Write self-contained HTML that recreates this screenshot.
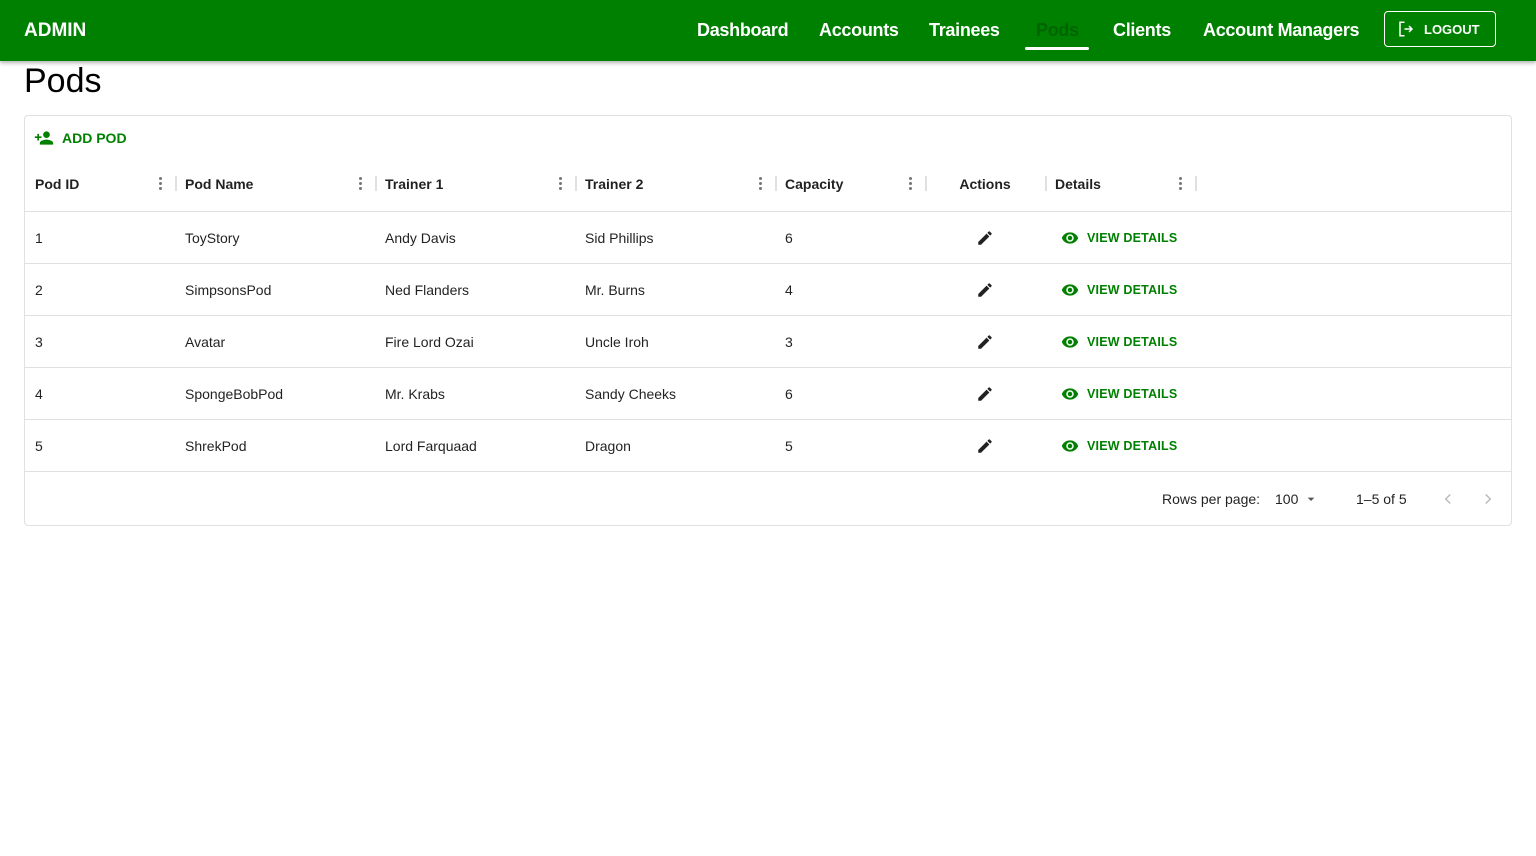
<!DOCTYPE html>
<html><head><meta charset="utf-8"><style>
*{box-sizing:border-box;margin:0;padding:0}
body{width:1536px;height:856px;background:#fff;font-family:"Liberation Sans",Arial,sans-serif;color:rgba(0,0,0,.87);position:relative;overflow:hidden}
.nav{position:absolute;left:0;top:0;width:1536px;height:61px;background:#008000;box-shadow:0 2px 4px rgba(0,0,0,.3)}
.nav .brand{position:absolute;left:24px;top:20px;color:#fff;font-size:19px;font-weight:bold}
.nav a{position:absolute;top:20px;color:#fff;font-size:18px;font-weight:bold;letter-spacing:-.3px}
.ul{position:absolute;left:1025px;top:47px;width:64px;height:3px;background:#fff;border-radius:2px}
.logout{position:absolute;left:1384px;top:11px;width:112px;height:36px;border:1px solid #fff;border-radius:4px;color:#fff;font-size:13px;font-weight:bold}
h1{position:absolute;left:24px;top:62px;font-size:34px;font-weight:normal;color:#000}
.card{position:absolute;left:24px;top:115px;width:1488px;height:411px;border:1px solid #e0e0e0;border-radius:4px}
.add{position:absolute;left:9px;top:12px;color:#008000;font-size:14px;font-weight:bold;display:flex;align-items:center;gap:8px}
.hdr{position:absolute;left:0;top:43px;width:1486px;height:53px;border-bottom:1px solid #e0e0e0;font-size:14px;font-weight:bold}
.hdr .c{height:50px}
.row{position:absolute;left:0;width:1486px;height:52px;border-bottom:1px solid #e0e0e0;font-size:14px}
.c{position:absolute;top:0;height:100%;display:flex;align-items:center}
.sep{position:absolute;top:17px;width:2px;height:15px;background:#e0e0e0}
.dots{position:absolute;top:17px;width:4px;height:16px}
.dots i{display:block;width:3px;height:3px;border-radius:50%;background:#757575;margin:1px 0 2px}
.vd{color:#008000;font-weight:bold;font-size:12.5px;display:flex;align-items:center;gap:8px;letter-spacing:.2px}
.foot{position:absolute;top:364px;left:0;width:1486px;height:38px;font-size:14px}
</style></head><body>
<div class="nav">
<div class="brand">ADMIN</div>
<a style="left:697px">Dashboard</a>
<a style="left:819px">Accounts</a>
<a style="left:929px">Trainees</a>
<a style="left:1036px;color:#006400">Pods</a>
<a style="left:1113px">Clients</a>
<a style="left:1203px">Account Managers</a>
<div class="ul"></div>
<div class="logout"><svg style="position:absolute;left:12px;top:8px" width="18" height="18" viewBox="0 0 24 24" fill="none" stroke="#fff" stroke-width="2"><path d="M10 3H4v18h6M10 12h10M16 8l4 4-4 4"/></svg><span style="position:absolute;left:39px;top:10px">LOGOUT</span></div>
</div>
<h1>Pods</h1>
<div class="card">
<div class="add"><svg width="20" height="20" viewBox="0 0 24 24" fill="#008000"><path d="M15 12c2.21 0 4-1.79 4-4s-1.79-4-4-4-4 1.79-4 4 1.79 4 4 4zm-9-2V7H4v3H1v2h3v3h2v-3h3v-2H6zm9 4c-2.67 0-8 1.34-8 4v2h16v-2c0-2.66-5.330-4-8-4z"/></svg>ADD POD</div>
<div class="hdr">
<div class="c" style="left:10px">Pod ID</div>
<div class="c" style="left:160px">Pod Name</div>
<div class="c" style="left:360px">Trainer 1</div>
<div class="c" style="left:560px">Trainer 2</div>
<div class="c" style="left:760px">Capacity</div>
<div class="c" style="left:900px;width:120px;justify-content:center">Actions</div>
<div class="c" style="left:1030px">Details</div>
<div class="dots" style="left:134px"><i></i><i></i><i></i></div><div class="sep" style="left:150px"></div>
<div class="dots" style="left:334px"><i></i><i></i><i></i></div><div class="sep" style="left:350px"></div>
<div class="dots" style="left:534px"><i></i><i></i><i></i></div><div class="sep" style="left:550px"></div>
<div class="dots" style="left:734px"><i></i><i></i><i></i></div><div class="sep" style="left:750px"></div>
<div class="dots" style="left:884px"><i></i><i></i><i></i></div><div class="sep" style="left:900px"></div>
<div class="sep" style="left:1020px"></div>
<div class="dots" style="left:1154px"><i></i><i></i><i></i></div><div class="sep" style="left:1170px"></div>
</div>
<div class="row" style="top:96px"><div class="c" style="left:10px">1</div><div class="c" style="left:160px">ToyStory</div><div class="c" style="left:360px">Andy Davis</div><div class="c" style="left:560px">Sid Phillips</div><div class="c" style="left:760px">6</div><div class="c" style="left:951px"><svg width="18" height="18" viewBox="0 0 24 24" fill="#222"><path d="M3 17.25V21h3.75L17.81 9.94l-3.75-3.75L3 17.25zM20.71 7.04a1 1 0 000-1.41l-2.34-2.34a1 1 0 00-1.41 0l-1.83 1.83 3.75 3.75 1.83-1.83z"/></svg></div><div class="c vd" style="left:1036px"><svg width="18" height="18" viewBox="0 0 24 24" fill="#008000"><path d="M12 4.5C7 4.5 2.73 7.61 1 12c1.73 4.39 6 7.5 11 7.5s9.27-3.11 11-7.5c-1.73-4.39-6-7.5-11-7.5zM12 17a5 5 0 110-10 5 5 0 010 10zm0-8a3 3 0 100 6 3 3 0 000-6z"/></svg>VIEW DETAILS</div></div>
<div class="row" style="top:148px"><div class="c" style="left:10px">2</div><div class="c" style="left:160px">SimpsonsPod</div><div class="c" style="left:360px">Ned Flanders</div><div class="c" style="left:560px">Mr. Burns</div><div class="c" style="left:760px">4</div><div class="c" style="left:951px"><svg width="18" height="18" viewBox="0 0 24 24" fill="#222"><path d="M3 17.25V21h3.75L17.81 9.94l-3.75-3.75L3 17.25zM20.71 7.04a1 1 0 000-1.41l-2.34-2.34a1 1 0 00-1.41 0l-1.83 1.83 3.75 3.75 1.83-1.83z"/></svg></div><div class="c vd" style="left:1036px"><svg width="18" height="18" viewBox="0 0 24 24" fill="#008000"><path d="M12 4.5C7 4.5 2.73 7.61 1 12c1.73 4.39 6 7.5 11 7.5s9.27-3.11 11-7.5c-1.73-4.39-6-7.5-11-7.5zM12 17a5 5 0 110-10 5 5 0 010 10zm0-8a3 3 0 100 6 3 3 0 000-6z"/></svg>VIEW DETAILS</div></div>
<div class="row" style="top:200px"><div class="c" style="left:10px">3</div><div class="c" style="left:160px">Avatar</div><div class="c" style="left:360px">Fire Lord Ozai</div><div class="c" style="left:560px">Uncle Iroh</div><div class="c" style="left:760px">3</div><div class="c" style="left:951px"><svg width="18" height="18" viewBox="0 0 24 24" fill="#222"><path d="M3 17.25V21h3.75L17.81 9.94l-3.75-3.75L3 17.25zM20.71 7.04a1 1 0 000-1.41l-2.34-2.34a1 1 0 00-1.41 0l-1.83 1.83 3.75 3.75 1.83-1.83z"/></svg></div><div class="c vd" style="left:1036px"><svg width="18" height="18" viewBox="0 0 24 24" fill="#008000"><path d="M12 4.5C7 4.5 2.73 7.61 1 12c1.73 4.39 6 7.5 11 7.5s9.27-3.11 11-7.5c-1.73-4.39-6-7.5-11-7.5zM12 17a5 5 0 110-10 5 5 0 010 10zm0-8a3 3 0 100 6 3 3 0 000-6z"/></svg>VIEW DETAILS</div></div>
<div class="row" style="top:252px"><div class="c" style="left:10px">4</div><div class="c" style="left:160px">SpongeBobPod</div><div class="c" style="left:360px">Mr. Krabs</div><div class="c" style="left:560px">Sandy Cheeks</div><div class="c" style="left:760px">6</div><div class="c" style="left:951px"><svg width="18" height="18" viewBox="0 0 24 24" fill="#222"><path d="M3 17.25V21h3.75L17.81 9.94l-3.75-3.75L3 17.25zM20.71 7.04a1 1 0 000-1.41l-2.34-2.34a1 1 0 00-1.41 0l-1.83 1.83 3.75 3.75 1.83-1.83z"/></svg></div><div class="c vd" style="left:1036px"><svg width="18" height="18" viewBox="0 0 24 24" fill="#008000"><path d="M12 4.5C7 4.5 2.73 7.61 1 12c1.73 4.39 6 7.5 11 7.5s9.27-3.11 11-7.5c-1.73-4.39-6-7.5-11-7.5zM12 17a5 5 0 110-10 5 5 0 010 10zm0-8a3 3 0 100 6 3 3 0 000-6z"/></svg>VIEW DETAILS</div></div>
<div class="row" style="top:304px"><div class="c" style="left:10px">5</div><div class="c" style="left:160px">ShrekPod</div><div class="c" style="left:360px">Lord Farquaad</div><div class="c" style="left:560px">Dragon</div><div class="c" style="left:760px">5</div><div class="c" style="left:951px"><svg width="18" height="18" viewBox="0 0 24 24" fill="#222"><path d="M3 17.25V21h3.75L17.81 9.94l-3.75-3.75L3 17.25zM20.71 7.04a1 1 0 000-1.41l-2.34-2.34a1 1 0 00-1.41 0l-1.83 1.83 3.75 3.75 1.83-1.83z"/></svg></div><div class="c vd" style="left:1036px"><svg width="18" height="18" viewBox="0 0 24 24" fill="#008000"><path d="M12 4.5C7 4.5 2.73 7.61 1 12c1.73 4.39 6 7.5 11 7.5s9.27-3.11 11-7.5c-1.73-4.39-6-7.5-11-7.5zM12 17a5 5 0 110-10 5 5 0 010 10zm0-8a3 3 0 100 6 3 3 0 000-6z"/></svg>VIEW DETAILS</div></div>
<div class="foot">
<div class="c" style="left:1137px">Rows per page:</div>
<div class="c" style="left:1250px">100</div>
<svg style="position:absolute;left:1278px;top:11px" width="16" height="16" viewBox="0 0 24 24" fill="#555"><path d="M7 10l5 5 5-5z"/></svg>
<div class="c" style="left:1331px">1–5 of 5</div>
<svg style="position:absolute;left:1414px;top:10px" width="18" height="18" viewBox="0 0 24 24" fill="none" stroke="#bbb" stroke-width="2"><path d="M15 6l-6 6 6 6"/></svg>
<svg style="position:absolute;left:1454px;top:10px" width="18" height="18" viewBox="0 0 24 24" fill="none" stroke="#bbb" stroke-width="2"><path d="M9 6l6 6-6 6"/></svg>
</div>
</div>
</body></html>
